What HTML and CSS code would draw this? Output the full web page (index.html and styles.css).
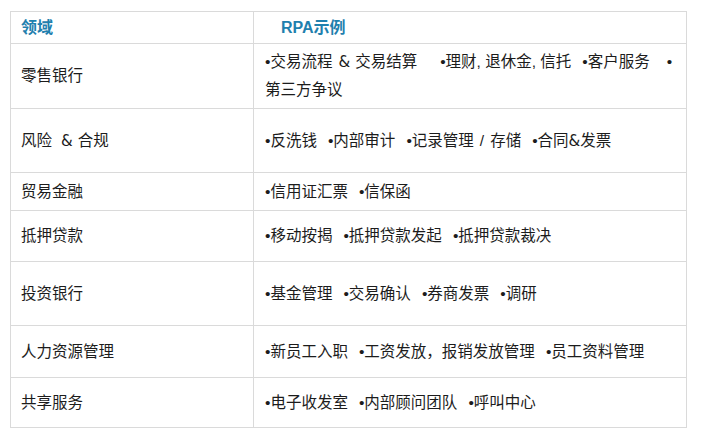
FILE: index.html
```html
<!DOCTYPE html>
<html lang="zh-CN">
<head>
<meta charset="utf-8">
<title>RPA示例</title>
<link rel="stylesheet" href="styles.css">
</head>
<body>
<div class="page">
<table class="grid">
  <colgroup><col class="c1"><col class="c2"></colgroup>
  <tr class="head h0">
    <th class="area">领域</th>
    <th class="ex">RPA示例</th>
  </tr>
  <tr class="h1">
    <td class="area">零售银行</td>
    <td class="ex"><span class="item">•交易流程<span class="amp">&amp;</span>交易结算</span><span class="item wide">•理财, 退休金, 信托</span><span class="item">•客户服务</span><span class="item mid">•</span><br>第三方争议</td>
  </tr>
  <tr class="h2">
    <td class="area">风险<span class="amp lead">&amp;</span>合规</td>
    <td class="ex"><span class="item">•反洗钱</span><span class="item">•内部审计</span><span class="item">•记录管理<span class="slash">/</span>存储</span><span class="item">•合同<span class="amp tight">&amp;</span>发票</span></td>
  </tr>
  <tr class="h3">
    <td class="area">贸易金融</td>
    <td class="ex"><span class="item">•信用证汇票</span><span class="item">•信保函</span></td>
  </tr>
  <tr class="h4">
    <td class="area">抵押贷款</td>
    <td class="ex"><span class="item">•移动按揭</span><span class="item">•抵押贷款发起</span><span class="item">•抵押贷款裁决</span></td>
  </tr>
  <tr class="h5">
    <td class="area">投资银行</td>
    <td class="ex"><span class="item">•基金管理</span><span class="item">•交易确认</span><span class="item">•券商发票</span><span class="item">•调研</span></td>
  </tr>
  <tr class="h6">
    <td class="area">人力资源管理</td>
    <td class="ex"><span class="item">•新员工入职</span><span class="item">•工资发放，报销发放管理</span><span class="item">•员工资料管理</span></td>
  </tr>
  <tr class="h7">
    <td class="area">共享服务</td>
    <td class="ex"><span class="item">•电子收发室</span><span class="item">•内部顾问团队</span><span class="item">•呼叫中心</span></td>
  </tr>
</table>
</div>
</body>
</html>
```

FILE: styles.css
```css
html, body {
  margin: 0;
  padding: 0;
  background: #ffffff;
}

.page {
  padding: 11px 0 0 10px;
}

.grid {
  border-collapse: collapse;
  width: 676px;
  table-layout: fixed;
  font-family: "Liberation Sans", "Noto Sans CJK SC", sans-serif;
  font-size: 15.5px;
  color: #1c1c1c;
}

.c1 { width: 243px; }
.c2 { width: 433px; }

.grid th,
.grid td {
  border: 1px solid #dadada;
  vertical-align: middle;
  text-align: left;
  padding: 0;
  line-height: 28px;
}

.grid th {
  color: #1f80ae;
  font-weight: bold;
  font-size: 16px;
}

.grid .area { padding-left: 10px; }
.grid td.ex { padding-left: 11px; padding-right: 6px; }
.grid th.ex { padding-left: 27px; }

.item + .item { margin-left: 11px; }
.item.wide { margin-left: 23px; }
.item.mid { margin-left: 17px; }

.amp {
  font-family: "DejaVu Sans", sans-serif;
  font-size: 15px;
  margin: 0 5px 0 6px;
}
.amp.lead { margin: 0 5px 0 9px; }
.amp.tight { margin: 0; }

.slash { margin: 0 6px; }

.h0 { height: 32px; }
.h1 { height: 65px; }
.h2 { height: 64px; }
.h3 { height: 38px; }
.h4 { height: 51px; }
.h5 { height: 64px; }
.h6 { height: 52px; }
.h7 { height: 50px; }
```
